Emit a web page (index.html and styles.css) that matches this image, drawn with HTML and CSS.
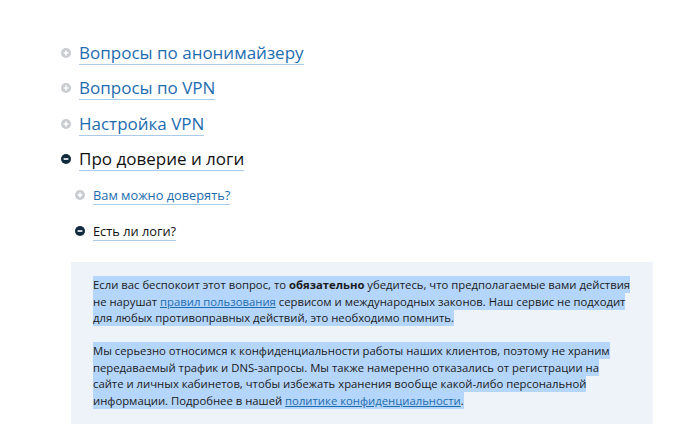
FILE: index.html
```html
<!DOCTYPE html>
<html lang="ru">
<head>
    <meta charset="UTF-8">
    <meta name="viewport" content="width=device-width, initial-scale=1.0">
    <title>FAQ</title>
    <link rel="stylesheet" href="styles.css">
</head>
<body>
    <div class="faq">
        <ul class="topics">
            <li class="topic">
                <svg class="icon" viewBox="0 0 10 10"><circle cx="5" cy="5" r="5" fill="#c9ccd1"/><path d="M2.6 5h4.8M5 2.6v4.8" stroke="#fff" stroke-width="1.6"/></svg>
                <a href="#" class="topic-link">Вопросы по анонимайзеру</a>
            </li>
            <li class="topic">
                <svg class="icon" viewBox="0 0 10 10"><circle cx="5" cy="5" r="5" fill="#c9ccd1"/><path d="M2.6 5h4.8M5 2.6v4.8" stroke="#fff" stroke-width="1.6"/></svg>
                <a href="#" class="topic-link">Вопросы по VPN</a>
            </li>
            <li class="topic">
                <svg class="icon" viewBox="0 0 10 10"><circle cx="5" cy="5" r="5" fill="#c9ccd1"/><path d="M2.6 5h4.8M5 2.6v4.8" stroke="#fff" stroke-width="1.6"/></svg>
                <a href="#" class="topic-link">Настройка VPN</a>
            </li>
            <li class="topic open">
                <svg class="icon" viewBox="0 0 10 10"><circle cx="5" cy="5" r="5" fill="#0e2a3c"/><path d="M2.6 5h4.8" stroke="#fff" stroke-width="1.6"/></svg>
                <a href="#" class="topic-link">Про доверие и логи</a>
            </li>
        </ul>
        <ul class="questions">
            <li class="question">
                <svg class="icon" viewBox="0 0 10 10"><circle cx="5" cy="5" r="5" fill="#c9ccd1"/><path d="M2.6 5h4.8M5 2.6v4.8" stroke="#fff" stroke-width="1.6"/></svg>
                <a href="#" class="question-link">Вам можно доверять?</a>
            </li>
            <li class="question open">
                <svg class="icon" viewBox="0 0 10 10"><circle cx="5" cy="5" r="5" fill="#0e2a3c"/><path d="M2.6 5h4.8" stroke="#fff" stroke-width="1.6"/></svg>
                <a href="#" class="question-link">Есть ли логи?</a>
            </li>
        </ul>
        <div class="answer">
            <p><span class="sel">Если вас беспокоит этот вопрос, то <b>обязательно</b> убедитесь, что предполагаемые вами действия не нарушат <a href="#">правил пользования</a> сервисом и международных законов. Наш сервис не подходит для любых противоправных действий, это необходимо помнить.</span></p>
            <p><span class="sel">Мы серьезно относимся к конфиденциальности работы наших клиентов, поэтому не храним передаваемый трафик и DNS-запросы. Мы также намеренно отказались от регистрации на сайте и личных кабинетов, чтобы избежать хранения вообще какой-либо персональной информации. Подробнее в нашей <a href="#">политике конфиденциальности</a>.</span></p>
        </div>
    </div>
</body>
</html>
```

FILE: styles.css
```css
body {
    margin: 0;
    font-family: "Open Sans", Arial, sans-serif;
    background-color: #fff;
    color: #1a1a1a;
}
.faq {
    padding: 35px 47px 0 61px;
}
ul {
    list-style: none;
    margin: 0;
    padding: 0;
}
.topic {
    display: flex;
    align-items: center;
    gap: 8px;
    height: 35.5px;
}
.icon {
    width: 10px;
    height: 10px;
    flex: none;
}
.topic-link {
    font-size: 17px;
    color: #1d6cb0;
    text-decoration: none;
    border-bottom: 1px solid #a9cbe8;
}
.questions {
    padding-left: 14px;
}
.question {
    display: flex;
    align-items: center;
    gap: 8px;
    height: 36px;
}
.question-link {
    font-size: 12.8px;
    color: #1d6cb0;
    text-decoration: none;
    border-bottom: 1px solid #a9cbe8;
}
.open .topic-link, .open .question-link {
    color: #111;
}
.answer {
    margin: 13px 0 0 10px;
    padding: 15px 22.5px 15px 22px;
    background-color: #eef3fa;
    font-size: 11.3px;
    line-height: 16.5px;
    color: #1a1a1a;
}
.answer p {
    margin: 0;
}
.answer p + p {
    margin-top: 16.5px;
}
.sel {
    background-color: #b5d6fc;
    padding: 1px 0;
}
.answer a {
    color: #1d6cb0;
}
```
